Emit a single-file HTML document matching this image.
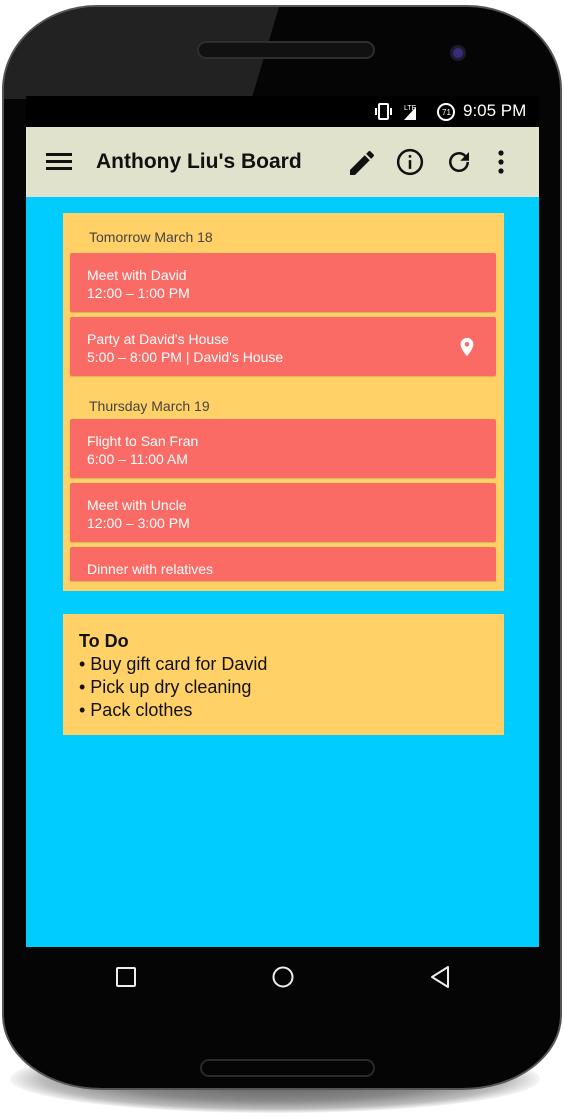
<!DOCTYPE html>
<html><head><meta charset="utf-8"><style>
*{margin:0;padding:0;box-sizing:border-box}
body{width:564px;height:1117px;background:#fff;position:relative;overflow:hidden;font-family:"Liberation Sans",sans-serif}
.shadow{position:absolute;left:10px;top:1045px;width:530px;height:68px;border-radius:50%;background:radial-gradient(ellipse at center,#555 0%,#888 45%,#bbb 62%,rgba(255,255,255,0) 72%)}
.phone{position:absolute;left:2px;top:5px;width:560px;height:1085px;background:#050505;border-radius:95px 95px 100px 100px/85px 85px 75px 75px;border:2px solid #555;overflow:hidden}
.gloss{position:absolute;left:0;top:0;width:275px;height:92px;background:#222;clip-path:polygon(0 0,100% 0,90% 100%,0 100%)}
.speaker{position:absolute;left:193px;top:34px;width:178px;height:18px;border-radius:9px;border:2px solid #2e2e2e;background:#111}
.cam{position:absolute;left:446px;top:38px;width:16px;height:16px;border-radius:50%;background:#3a2a7a;border:3px solid #1d1d2a}
.speaker2{position:absolute;left:196px;top:1052px;width:175px;height:18px;border-radius:9px;border:2px solid #2a2a2a}
.screen{position:absolute;left:26px;top:96px;width:513px;height:851px;background:#00ccff}
.status{position:absolute;left:0;top:0;width:513px;height:31px;background:#000;color:#fff;font-size:17px}
.bar{position:absolute;left:0;top:31px;width:513px;height:70px;background:#e0e2cc}
.title{position:absolute;left:70px;top:23px;font-size:21px;font-weight:bold;color:#111}
.card{position:absolute;left:37px;width:441px;background:#ffd166}
.hdr{position:absolute;left:26px;font-size:14px;color:#444}
.ev{position:absolute;left:7px;width:426px;height:59px;background:#fb6b66;border-radius:2px;color:#fff;font-size:14px;padding:13px 0 0 17px;line-height:18px;box-shadow:0 1px 1px rgba(0,0,0,.15)}
.todo{font-size:18px;color:#111;line-height:23px;padding:16px 0 0 16px}
</style></head><body>
<div class="shadow"></div>
<div class="phone"><div class="gloss"></div><div class="speaker"></div><div class="cam"></div><div class="speaker2"></div></div>
<div class="screen">
 <div class="status">
  <svg style="position:absolute;left:348px;top:6px" width="84" height="20" viewBox="0 0 84 20" fill="#fff">
   <rect x="5" y="2" width="9" height="15" rx="1" fill="none" stroke="#fff" stroke-width="2"/>
   <rect x="1" y="6" width="2" height="7"/><rect x="16" y="6" width="2" height="7"/>
   <text x="30" y="8" font-size="7" font-family="Liberation Sans" fill="#fff">LTE</text>
   <polygon points="30,18 42,18 42,5"/>
   <circle cx="72" cy="10" r="8" fill="none" stroke="#fff" stroke-width="2"/>
   <text x="68" y="13" font-size="8" font-family="Liberation Sans" fill="#fff">71</text>
  </svg>
  <span style="position:absolute;left:437px;top:5px">9:05 PM</span>
 </div>
 <div class="bar">
  <svg style="position:absolute;left:20px;top:25px" width="26" height="20"><rect y="1" width="26" height="3" fill="#111"/><rect y="8" width="26" height="3" fill="#111"/><rect y="15" width="26" height="3" fill="#111"/></svg>
  <div class="title">Anthony Liu's Board</div>
  <svg style="position:absolute;left:320px;top:20px" width="32" height="32" viewBox="0 0 24 24"><path fill="#111" d="M3 17.25V21h3.75L17.8 9.94l-3.75-3.75L3 17.25zM20.7 7.04a1 1 0 000-1.41l-2.34-2.34a1 1 0 00-1.41 0l-1.83 1.83 3.75 3.75 1.83-1.83z"/></svg>
  <svg style="position:absolute;left:369px;top:20px" width="30" height="30" viewBox="0 0 24 24"><circle cx="12" cy="12" r="9.5" fill="none" stroke="#111" stroke-width="2"/><rect x="11" y="10.5" width="2" height="7" fill="#111"/><rect x="11" y="6.5" width="2" height="2" fill="#111"/></svg>
  <svg style="position:absolute;left:418px;top:20px" width="30" height="30" viewBox="0 0 24 24"><path fill="#111" d="M17.65 6.35A7.96 7.96 0 0012 4a8 8 0 108 8h-2a6 6 0 11-1.76-4.24L13 11h7V4l-2.35 2.35z"/></svg>
  <svg style="position:absolute;left:470px;top:22px" width="10" height="26"><circle cx="5" cy="4" r="2.6" fill="#111"/><circle cx="5" cy="13" r="2.6" fill="#111"/><circle cx="5" cy="22" r="2.6" fill="#111"/></svg>
 </div>
 <div class="card" style="top:117px;height:378px;overflow:hidden">
  <div class="hdr" style="top:16px">Tomorrow March 18</div>
  <div class="ev" style="top:40px">Meet with David<br>12:00 – 1:00 PM</div>
  <div class="ev" style="top:104px">Party at David's House<br>5:00 – 8:00 PM | David's House
   <svg style="position:absolute;left:386px;top:16px" width="22" height="28" viewBox="0 0 24 24"><path fill="#fff" d="M12 2C8.13 2 5 5.13 5 9c0 5.25 7 13 7 13s7-7.75 7-13c0-3.87-3.13-7-7-7zm0 9.5a2.5 2.5 0 110-5 2.5 2.5 0 010 5z"/></svg></div>
  <div class="hdr" style="top:185px">Thursday March 19</div>
  <div class="ev" style="top:206px">Flight to San Fran<br>6:00 – 11:00 AM</div>
  <div class="ev" style="top:270px">Meet with Uncle<br>12:00 – 3:00 PM</div>
  <div class="ev" style="top:334px;height:34px;overflow:hidden;border-radius:2px 2px 0 0">Dinner with relatives<br>6:00 – 7:00 PM</div>
 </div>
 <div class="card todo" style="top:518px;height:121px"><b>To Do</b><br>• Buy gift card for David<br>• Pick up dry cleaning<br>• Pack clothes</div>
</div>
<svg style="position:absolute;left:0;top:960px" width="564" height="40">
 <rect x="117" y="8" width="18" height="18" rx="1" fill="none" stroke="#eee" stroke-width="2"/>
 <circle cx="283" cy="17" r="9.5" fill="none" stroke="#eee" stroke-width="2"/>
 <polygon points="448,7 448,27 432,17" fill="none" stroke="#eee" stroke-width="2" stroke-linejoin="round"/>
</svg>
</body></html>
